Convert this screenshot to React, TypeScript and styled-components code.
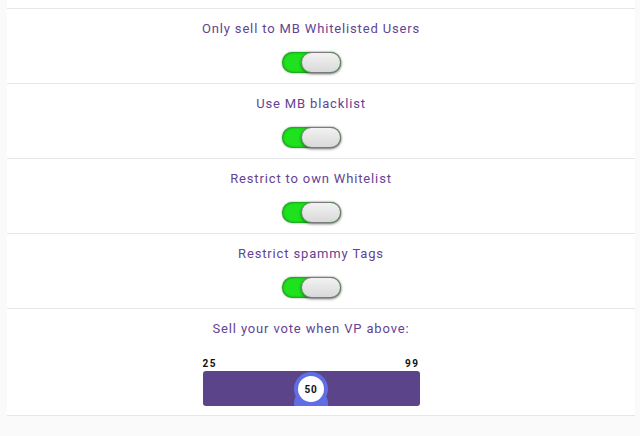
import React, { useState } from 'react'
import styled, { createGlobalStyle } from 'styled-components'

const Global = createGlobalStyle`
  html, body {
    margin: 0;
    padding: 0;
    background: #fafafa;
    font-family: Roboto, "Liberation Sans", Arial, sans-serif;
  }
`

const options = [
  'Only sell to MB Whitelisted Users',
  'Use MB blacklist',
  'Restrict to own Whitelist',
  'Restrict spammy Tags',
]

const App = () => {
  const [checked, setChecked] = useState<boolean[]>([true, true, true, true])
  const min = 25
  const max = 99
  const [vp] = useState(50)
  // thumb sits on a 0..100 scale
  const pct = vp

  const toggle = (i: number) => {
    setChecked(checked.map((c, j) => (j === i ? !c : c)))
  }

  return (
    <Page>
      <Global />
      <Wrapper>
        {options.map((o, i) => (
          <Row key={o}>
            <Title>{o}</Title>
            <Switch on={checked[i]} onClick={() => toggle(i)}>
              <Knob on={checked[i]} />
            </Switch>
          </Row>
        ))}
        <SliderRow>
          <Title>Sell your vote when VP above:</Title>
          <SliderBox>
            <Labels>
              <span>{min}</span>
              <span>{max}</span>
            </Labels>
            <Bar>
              <Thumb style={{ left: `${pct}%` }}>
                <Neck />
                <Ring>
                  <Inner>{vp}</Inner>
                </Ring>
              </Thumb>
            </Bar>
          </SliderBox>
        </SliderRow>
      </Wrapper>
    </Page>
  )
}

export default App

const Page = styled.div`
  width: 640px;
  height: 436px;
  overflow: hidden;
  background: #fafafa;
`
const Wrapper = styled.div`
  margin-left: 7px;
  width: 628px;
  padding-top: 8px;
  background: #fff;
  border-bottom: 1px solid #e6e6e6;
`
const Row = styled.div`
  height: 74px;
  border-top: 1px solid #e6e6e6;
  display: flex;
  flex-direction: column;
  align-items: center;
  padding-right: 20px;
`
const Title = styled.div`
  margin-top: 12px;
  font-size: 13px;
  letter-spacing: 0.85px;
  color: #634394;
  line-height: 16px;
`
const Switch = styled.div<{ on: boolean }>`
  margin-top: 15px;
  width: 59px;
  height: 21px;
  border-radius: 11px;
  position: relative;
  background: ${({ on }) => (on ? '#1fe21f' : '#cfcfcf')};
  box-shadow: inset 0 0 3px rgba(0, 0, 0, 0.6), 0 0 2px rgba(0, 0, 0, 0.45);
  cursor: pointer;
`
const Knob = styled.div<{ on: boolean }>`
  position: absolute;
  top: 0;
  left: ${({ on }) => (on ? '19px' : '0')};
  width: 40px;
  height: 21px;
  box-sizing: border-box;
  border-radius: 11px;
  border: 1px solid #7a7a7a;
  background: linear-gradient(#f2f2f2, #d9d9d9);
  box-shadow: 0 1px 3px rgba(0, 0, 0, 0.5);
`
const SliderRow = styled.div`
  height: 106px;
  border-top: 1px solid #e6e6e6;
  display: flex;
  flex-direction: column;
  align-items: center;
  padding-right: 20px;
`
const SliderBox = styled.div`
  width: 217px;
  margin-top: 21px;
`
const Labels = styled.div`
  display: flex;
  justify-content: space-between;
  font-size: 10px;
  font-weight: 700;
  letter-spacing: 1.5px;
  color: #111;
  line-height: 12px;
  padding-bottom: 1px;
`
const Bar = styled.div`
  position: relative;
  height: 35px;
  border-radius: 3px;
  background: #5b4489;
`
const Thumb = styled.div`
  position: absolute;
  top: 0;
  width: 0;
  height: 35px;
`
const Neck = styled.div`
  position: absolute;
  left: -17px;
  bottom: 0;
  width: 34px;
  height: 14px;
  background: #5f6fe3;
  border-radius: 10px 10px 0 0;
`
const Ring = styled.div`
  position: absolute;
  left: -17px;
  top: 1px;
  width: 34px;
  height: 34px;
  border-radius: 50%;
  background: #5f6fe3;
  display: flex;
  align-items: center;
  justify-content: center;
`
const Inner = styled.div`
  width: 26px;
  height: 26px;
  border-radius: 50%;
  background: #fff;
  display: flex;
  align-items: center;
  justify-content: center;
  font-size: 10px;
  font-weight: 700;
  letter-spacing: 0.8px;
  color: #111;
`
